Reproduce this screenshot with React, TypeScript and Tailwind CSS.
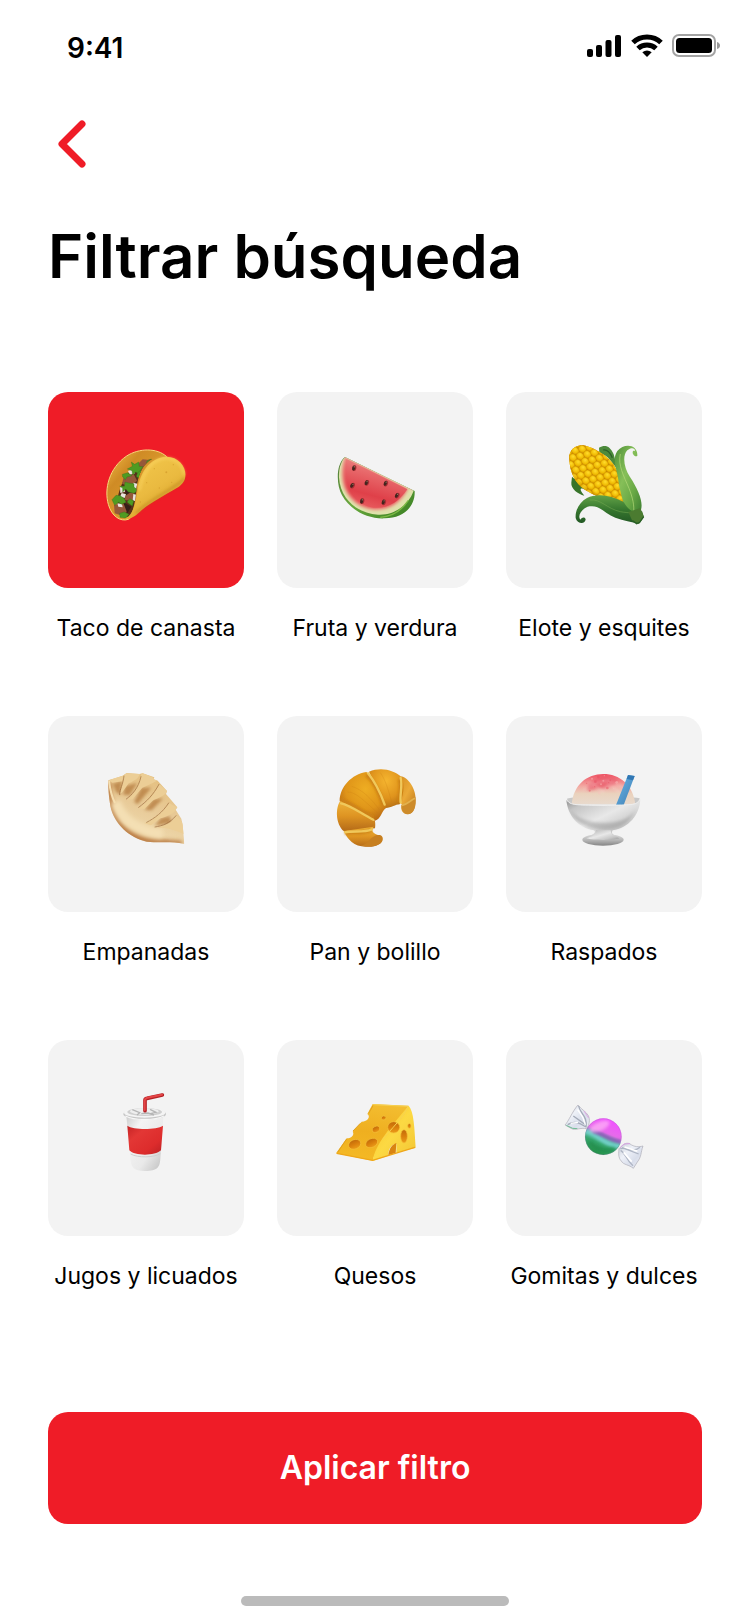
import { useState, type ReactNode } from "react";

type Stop = [number, string];

function Linear({ id, stops, x1 = 0, y1 = 0, x2 = 0, y2 = 1 }: { id: string; stops: Stop[]; x1?: number; y1?: number; x2?: number; y2?: number }) {
  return (
    <linearGradient id={id} x1={x1} y1={y1} x2={x2} y2={y2}>
      {stops.map(([o, c]) => <stop key={o} offset={o} stopColor={c} />)}
    </linearGradient>
  );
}

function Radial({ id, stops, cx = 0.5, cy = 0.5, r = 0.5 }: { id: string; stops: Stop[]; cx?: number; cy?: number; r?: number }) {
  return (
    <radialGradient id={id} cx={cx} cy={cy} r={r}>
      {stops.map(([o, c]) => <stop key={o} offset={o} stopColor={c} />)}
    </radialGradient>
  );
}

function Soft({ id, d }: { id: string; d: number }) {
  return (
    <filter id={id} x="-30%" y="-30%" width="160%" height="160%">
      <feGaussianBlur stdDeviation={d} />
    </filter>
  );
}

function Art({ box, children }: { box: string; children: ReactNode }) {
  return <svg viewBox={box} className="size-[110px]" aria-hidden="true">{children}</svg>;
}

function Taco() {
  return (
    <Art box="3 15 330 330">
      <defs>
        <Linear id="taco-back" x2={1} stops={[[0, "#f4c14a"], [0.3, "#cf8b25"], [1, "#e8ac38"]]} />
        <Linear id="taco-front" x1={0.2} x2={0.8} stops={[[0, "#f3c84c"], [0.5, "#eaba40"], [1, "#d09822"]]} />
        <Soft id="taco-soft" d={5} />
        <clipPath id="taco-clip"><path d="M226 79C168 81 146 116 139 182C136 215 129 247 117 263C76 282 43 216 58 157C72 103 120 57 177 60C199 62 216 69 226 79Z" /></clipPath>
      </defs>
      <path d="M230 80C201 53 147 54 110 78C57 114 42 177 55 223C65 259 91 276 115 268C132 260 144 214 150 170Z" fill="url(#taco-back)" stroke="#f7d779" strokeWidth="3" />
      <g clipPath="url(#taco-clip)">
        <path d="M188 88C158 88 123 113 103 147C82 187 72 235 96 260L133 261L163 115Z" fill="#573019" />
        <path d="M158 88l21 2 -7 25 -29 18 -5 -25zM102 137l29 -5 10 20 -20 18 -25 -9zM110 187l23 3 -6 23 -24 -3zM72 224l28 -5 15 20 -17 19 -24 -8z" fill="#96583a" />
        <path d="M108 168l20 15 -22 14zM99 216l25 14 -12 20z" fill="#351f18" />
        <g fill="#e9e5df"><path d="M114 123l15 -6 6 13 -16 4zM90 172l13 -2 2 15 -14 4zM130 158l12 3 -3 15 -12 -2zM95 189l13 4 -4 11 -14 -4zM130 192l9 2 -2 20 -9 -3zM82 220l14 2 2 10 -13 -2z" /></g>
        <g fill="#4f9b22" stroke="#34701c" strokeWidth="1">
          <path d="M127 109l-3 -13 10 7 12 -7 2 13 11 1 -8 12 1 12 -15 -8 -9 9 -2 -13 -14 -5z" />
          <path d="M97 133l16 -5 13 9 -15 4 -5 8 -8 -8z" />
          <path d="M103 169l2 -13 12 3 15 2 0 10 12 10 -12 9 -17 -4 -8 -9 -9 9 0 -12 -9 -5z" />
          <path d="M66 209l12 -13 13 1 12 9 5 11 -13 6 -9 -6 -12 9z" />
          <path d="M89 250l14 -4 14 7 -10 12 -17 -3z" />
          <path d="M111 216l8 -10 12 7 -4 15 -9 -6z" />
          <path d="M143 128l11 -8 2 14 -8 12 -9 -7zM171 93l13 -6 -8 18 -8 4z" />
        </g>
      </g>
      <path d="M143 179C149 128 179 85 225 80C267 78 290 112 286 140C284 155 275 165 259 175C224 196 177 220 150 245C132 262 117 269 101 268C134 255 137 213 143 179Z" fill="url(#taco-front)" />
      <path d="M148 181C159 129 180 93 220 85C251 80 280 102 282 134" fill="none" stroke="#ffda6a" strokeWidth="5" opacity=".75" filter="url(#taco-soft)" />
      <path d="M283 145C271 168 185 203 138 250" stroke="#a76c10" strokeWidth="6" fill="none" opacity=".5" filter="url(#taco-soft)" />
      <g fill="#c98d20" opacity=".5"><circle cx="193" cy="116" r="2" /><circle cx="229" cy="127" r="3" /><circle cx="170" cy="158" r="2" /><circle cx="208" cy="174" r="2" /><circle cx="250" cy="104" r="2" /><circle cx="151" cy="216" r="2" /><circle cx="245" cy="157" r="2" /></g>
    </Art>
  );
}

function Watermelon() {
  const seeds = [[101, 99, 12], [96, 151, 30], [139, 143, 20], [196, 145, 20], [125, 198, 12], [190, 201, 20], [230, 181, 28]];
  return (
    <Art box="0 0 330 330">
      <defs>
        <Linear id="melon-flesh" x1={0.7} y1={0} x2={0.35} y2={1} stops={[[0, "#ef9a92"], [0.35, "#e8696b"], [0.75, "#df4049"], [1, "#e85b5e"]]} />
        <Linear id="melon-rind" x2={1} stops={[[0, "#527b3a"], [0.5, "#68a83d"], [1, "#367d20"]]} />
        <Soft id="melon-soft" d={4} />
        <clipPath id="melon-clip"><path d="M75 67L278 167C254 204 218 236 172 235C113 232 61 186 60 120C60 97 66 79 75 67Z" /></clipPath>
      </defs>
      <path d="M75 66C49 85 47 146 66 181C90 226 145 253 195 250C250 249 286 216 284 168Z" fill="url(#melon-rind)" />
      <path d="M75 67L281 167C267 207 225 242 174 239C110 235 62 192 57 128C56 101 63 79 75 67Z" fill="#dfe1ab" />
      <g clipPath="url(#melon-clip)"><path d="M77 67L262 162C241 202 205 225 159 222C106 216 68 174 68 119C68 97 72 79 77 67Z" fill="url(#melon-flesh)" stroke="#ef8b82" strokeWidth="5" filter="url(#melon-soft)" /><path d="M79 73L262 163C238 199 205 222 160 218C106 209 70 164 79 73Z" fill="url(#melon-flesh)" /></g>
      <path d="M77 69L276 166" stroke="#efb8a0" strokeWidth="2" />
      <path d="M265 196C241 232 212 245 181 247" stroke="#7eba46" strokeWidth="4" fill="none" />
      {seeds.map(([x, y, a]) => (
        <g key={x + y} transform={`rotate(${a} ${x} ${y})`}><ellipse cx={x + 2} cy={y} rx="6" ry="9" fill="#a72e35" /><ellipse cx={x} cy={y} rx="4.5" ry="7.5" fill="#43251e" /><ellipse cx={x + 1} cy={y - 4} rx="2" ry="2" fill="#99715a" /></g>
      ))}
    </Art>
  );
}

function Corn() {
  const kernels: ReactNode[] = [];
  for (let r = -4; r < 5; r++)
    for (let c = -5; c < 7; c++)
      kernels.push(<ellipse key={`${r}/${c}`} cx={c * 22 + (r % 2 ? 11 : 0)} cy={r * 19} rx="12" ry="11" fill="url(#corn-kernel)" stroke="#c98a00" strokeWidth="1" />);
  return (
    <Art box="-18 15 330 330">
      <defs>
        <Radial id="corn-kernel" cx={0.4} cy={0.35} r={0.7} stops={[[0, "#ffdc2c"], [0.6, "#f1bd05"], [1, "#cf8b00"]]} />
        <Linear id="corn-leaf" x2={1} stops={[[0, "#4d8f38"], [0.4, "#86bf58"], [0.7, "#68a845"], [1, "#3b7c30"]]} />
        <Linear id="corn-lower" stops={[[0, "#63a247"], [0.5, "#37782f"], [1, "#225824"]]} />
        <clipPath id="corn-clip"><path d="M43 90C39 60 63 41 91 47C121 54 169 83 183 116C198 150 211 187 208 216C169 215 116 201 79 171C52 148 45 115 43 90Z" /></clipPath>
      </defs>
      <path d="M51 140C60 150 80 155 94 181C73 169 72 177 88 197C69 192 47 176 49 158Z" fill="#38742a" />
      <path d="M132 53C151 43 165 48 176 73L189 120L166 91C158 80 147 72 133 69Z" fill="#4c8a3b" />
      <path d="M145 60C159 58 167 72 172 83" stroke="#2c602a" strokeWidth="4" fill="none" />
      <g clipPath="url(#corn-clip)"><rect x="30" y="35" width="190" height="190" fill="#c98400" /><g transform="translate(120 127) rotate(47)">{kernels}</g><path d="M44 100C59 155 119 207 205 208L211 232L20 220Z" fill="#a25b00" opacity=".15" /></g>
      <path d="M247 77C249 43 208 37 187 63C169 90 187 119 190 150C193 179 203 205 207 226C222 251 236 258 253 249C270 228 253 183 225 141C207 112 201 78 217 61C229 51 241 54 240 64C235 60 231 65 234 72C238 79 244 81 247 77Z" fill="url(#corn-leaf)" />
      <path d="M196 72C188 105 207 139 222 175C233 203 238 225 236 249" stroke="#b4d978" strokeWidth="3" fill="none" opacity=".7" />
      <path d="M206 216C168 194 123 189 96 204C73 216 60 242 62 264C66 282 91 284 92 268C89 258 78 264 76 269C67 260 78 234 104 229C134 224 150 252 181 263C207 272 229 276 252 280L266 259L261 243C244 253 223 246 206 216Z" fill="url(#corn-lower)" />
      <path d="M104 210C138 206 155 236 196 245C224 250 244 250 258 239" stroke="#77ac54" strokeWidth="3" fill="none" opacity=".5" />
      <path d="M220 246l36 -12 11 27 -15 21 -20 -9z" fill="#4b7b30" />
      <path d="M232 272l13 9 9 -4 12 -17" stroke="#285f25" strokeWidth="4" fill="none" />
    </Art>
  );
}

function Empanada() {
  return (
    <Art box="3 12 330 330">
      <defs>
        <Linear id="emp-base" x1={0.7} x2={0.3} stops={[[0, "#e4bd79"], [0.5, "#e8ca98"], [0.75, "#edd6a8"], [1, "#c18445"]]} />
        <Soft id="emp-soft" d={7} /><Soft id="emp-mid" d={5} /><Soft id="emp-fine" d={2} />
        <clipPath id="emp-clip"><path d="M55 76L98 62L110 54L148 57L158 55L193 67L191 73L203 77L231 108L228 117L262 157L257 164L274 191L278 210L283 267C241 258 210 265 170 260C119 248 72 208 61 153C56 124 54 97 55 76Z" /></clipPath>
      </defs>
      <g clipPath="url(#emp-clip)">
        <rect x="45" y="45" width="245" height="230" fill="url(#emp-base)" />
        <path d="M57 83C53 170 91 247 182 258L276 265" stroke="#b06b31" strokeWidth="12" fill="none" filter="url(#emp-soft)" />
        <path d="M77 141C92 193 147 232 218 237" stroke="#f4dfb4" strokeWidth="30" fill="none" filter="url(#emp-soft)" />
        <g fill="#b07538" opacity=".7" filter="url(#emp-mid)">
          <path d="M68 86L96 77L91 120L78 111Z" /><path d="M105 93L142 84L119 121L99 119Z" /><path d="M154 98L184 98L143 148L132 140Z" /><path d="M190 133L220 130L185 166L164 165Z" /><path d="M213 189L239 184L245 205L194 212Z" />
        </g>
        <g fill="#ecce96" filter="url(#emp-fine)">
          <path d="M55 75L100 61L97 79L67 83Z" /><path d="M102 55L151 55C146 69 137 76 116 85L96 113L90 117C98 91 100 77 102 55Z" /><path d="M155 52L205 75C186 87 170 92 157 98L127 133L112 136C139 110 151 85 155 52Z" /><path d="M207 87L233 109C217 130 198 129 187 138L163 162L146 161C180 135 195 115 207 87Z" /><path d="M238 145L264 158C248 179 229 184 211 190L183 211L163 205C198 192 219 167 238 145Z" /><path d="M259 182L282 207L283 238C244 221 221 216 197 219C230 211 248 201 259 182Z" />
        </g>
        <g fill="none" stroke="#8e592d" strokeWidth="3" strokeLinecap="round" filter="url(#emp-fine)" opacity=".55"><path d="M102 63C99 91 89 100 89 119" /><path d="M153 65C145 101 125 120 109 132" /><path d="M207 88C189 121 169 140 146 157" /><path d="M236 144C218 172 195 189 170 202" /><path d="M258 182C239 205 219 212 195 216" /></g>
        <path d="M57 78C61 108 66 128 75 144" stroke="#f5deb0" strokeWidth="6" fill="none" filter="url(#emp-fine)" />
      </g>
    </Art>
  );
}

function Croissant() {
  return (
    <Art box="0 12 330 330">
      <defs>
        <Radial id="cro-a" cx={0.55} cy={0.35} r={0.7} stops={[[0, "#eead22"], [0.6, "#df9419"], [1, "#b66613"]]} />
        <Radial id="cro-b" cx={0.5} cy={0.3} r={0.75} stops={[[0, "#f5b52f"], [0.6, "#df931c"], [1, "#b16b15"]]} />
        <Linear id="cro-c" stops={[[0, "#eeb33a"], [0.5, "#de9422"], [1, "#b46a18"]]} />
        <Linear id="cro-d" x2={1} stops={[[0, "#d38b20"], [0.5, "#eba936"], [1, "#b66f19"]]} />
        <Soft id="cro-soft" d={3} />
      </defs>
      <path d="M244 64C270 70 292 112 286 143C284 171 272 180 258 177C245 173 241 161 246 150L228 122Z" fill="url(#cro-d)" />
      <path d="M244 150C268 144 275 129 286 126C291 153 281 181 260 177C248 174 243 160 244 150Z" fill="#cd8b2a" />
      <path d="M246 151C265 147 269 137 285 130" stroke="#e2b14e" strokeWidth="5" fill="none" />
      <path d="M147 50C184 34 222 46 244 65C257 94 249 120 239 148C226 148 215 159 197 159Z" fill="url(#cro-b)" />
      <path d="M59 137C60 95 95 58 139 51C173 79 196 132 199 158C183 169 184 192 165 197Z" fill="url(#cro-a)" />
      <path d="M61 137C46 158 46 206 72 229L165 220C167 207 165 202 165 197Z" fill="url(#cro-c)" />
      <path d="M72 228C81 253 103 275 137 275C164 278 190 267 188 252C188 240 171 242 161 233C154 226 157 220 161 215Z" fill="url(#cro-c)" />
      <path d="M121 272C142 270 145 251 170 240C185 238 190 245 187 254C182 273 150 278 121 272Z" fill="#c77f20" />
      <g stroke="#cd8114" strokeWidth="10" fill="none" filter="url(#cro-soft)"><path d="M139 60C165 82 178 115 189 151" /><path d="M63 135C90 140 123 170 161 186" /><path d="M75 234C98 230 130 238 154 225" /><path d="M238 73C246 88 239 117 236 141" /></g>
      <g stroke="#f0c85b" strokeWidth="7" fill="none" strokeLinecap="round"><path d="M144 55C168 84 180 110 194 149" /><path d="M63 145C92 151 121 174 160 194" /><path d="M75 232C102 226 130 234 156 223" /><path d="M242 69C248 91 239 119 242 143" /></g>
      <g stroke="#c57b13" strokeWidth="2" opacity=".35" fill="none"><path d="M82 111C108 109 139 145 174 174M95 94C128 104 154 132 178 164M181 53C196 73 206 109 215 141" /></g>
    </Art>
  );
}

function ShavedIce() {
  const flecks = [[110, 85], [126, 71], [145, 66], [163, 62], [181, 76], [200, 82], [134, 95], [153, 88], [172, 99], [191, 101], [119, 107], [148, 114], [176, 83], [160, 77], [136, 80]];
  return (
    <Art box="-3 12 330 330">
      <defs>
        <Linear id="ice-ball" stops={[[0, "#ee5263"], [0.4, "#f3a7a1"], [0.65, "#ead2bd"], [1, "#e8dacd"]]} />
        <Linear id="ice-bowl" x2={1} stops={[[0, "#8e8e8e"], [0.18, "#c6c6c6"], [0.48, "#e8e8e8"], [0.75, "#c9c9c9"], [1, "#999"]]} />
        <Linear id="ice-spoon" x2={1} stops={[[0, "#2d70aa"], [0.35, "#5aa3d7"], [1, "#407daf"]]} />
        <Linear id="ice-foot" stops={[[0, "#dedede"], [0.55, "#b5b5b5"], [1, "#858585"]]} /><Soft id="ice-soft" d={5} />
      </defs>
      <path d="M51 131C64 125 219 121 269 130L264 148H55Z" fill="#c8c8c8" />
      <path d="M65 148C70 90 110 57 160 57C208 57 249 89 256 148Z" fill="url(#ice-ball)" />
      <path d="M110 105C112 78 160 49 204 78C195 92 174 92 165 103C145 93 130 108 110 105Z" fill="#e7465b" opacity=".6" filter="url(#ice-soft)" />
      <path d="M115 82C143 94 162 65 190 82L226 102M103 103L132 90L158 110L177 87L209 111" stroke="#fff2ef" strokeWidth="4" opacity=".4" fill="none" filter="url(#ice-soft)" />
      {flecks.map(([x, y], i) => <circle key={i} cx={x} cy={y} r={i % 3 + 2} fill={i % 2 ? "#fac1be" : "#e84c5d"} opacity=".45" />)}
      <path d="M234 60L254 63L221 150H198Z" fill="url(#ice-spoon)" /><path d="M234 60L254 63L249 76L230 72Z" fill="#3177b4" />
      <path d="M49 135C60 153 92 150 159 152C229 150 260 153 271 133C269 180 235 220 188 226C183 235 188 241 201 243H118C134 238 138 231 132 226C85 219 53 181 49 135Z" fill="url(#ice-bowl)" />
      <path d="M60 165C90 210 221 224 255 165C235 210 207 223 163 225C104 221 74 198 60 165Z" fill="#777" opacity=".35" filter="url(#ice-soft)" />
      <ellipse cx="159" cy="254" rx="62" ry="18" fill="url(#ice-foot)" /><path d="M109 250C127 242 136 245 138 226H182C183 242 195 242 208 250C189 257 129 256 109 250Z" fill="url(#ice-bowl)" />
      <path d="M53 137C61 153 92 149 159 151C229 149 260 153 267 136" stroke="#eee" strokeWidth="3" fill="none" />
    </Art>
  );
}

function Cup() {
  return (
    <Art box="-12 9 330 330">
      <defs>
        <Linear id="cup-paper" x2={1} stops={[[0, "#cdcdcd"], [0.25, "#f4f4f4"], [0.65, "#e9e9e9"], [1, "#bdbdbd"]]} />
        <Linear id="cup-band" x2={1} stops={[[0, "#c52325"], [0.3, "#e33735"], [0.7, "#dd2c2c"], [1, "#b92023"]]} />
      </defs>
      <path d="M94 108H205L196 236C194 262 188 272 150 273C115 272 110 262 107 242Z" fill="url(#cup-paper)" />
      <path d="M97 137C115 150 184 150 204 137L198 211C178 229 119 228 103 211Z" fill="url(#cup-band)" />
      <path d="M107 222C128 234 177 233 196 221" stroke="#cfcfcf" strokeWidth="3" fill="none" />
      <ellipse cx="149" cy="102" rx="64" ry="17" fill="#c6c6c6" /><ellipse cx="149" cy="98" rx="62" ry="15" fill="#f4f4f4" />
      <ellipse cx="149" cy="96" rx="52" ry="12" fill="#cfcfcf" /><ellipse cx="148" cy="94" rx="43" ry="10" fill="#eee" />
      <path d="M112 89l22 9 -8 7M165 88l18 9 -17 4M139 101l20 -2 18 6" stroke="#b5b5b5" strokeWidth="4" fill="none" />
      <path d="M150 92V61Q150 56 156 55L202 45" stroke="#b32025" strokeWidth="11" fill="none" strokeLinecap="round" />
      <path d="M149 90V61Q150 55 157 53L201 44" stroke="#e54546" strokeWidth="6" fill="none" strokeLinecap="round" />
      <path d="M91 108C118 122 180 122 207 108" stroke="#f7f7f7" strokeWidth="4" fill="none" />
    </Art>
  );
}

function Cheese() {
  const holes = [[89, 178, 19, 14, -22], [140, 174, 19, 13, -25], [153, 133, 12, 9, -24], [176, 99, 7, 6, -10], [206, 127, 18, 17, 0], [237, 154, 10, 20, 0], [253, 123, 5, 7, 0]];
  return (
    <Art box="-15 -6 330 330">
      <defs>
        <Linear id="ch-top" x1={0.6} x2={0.4} stops={[[0, "#f3bd30"], [0.5, "#efaf20"], [1, "#f4b925"]]} />
        <Linear id="ch-side" x2={1} stops={[[0, "#f7c326"], [0.5, "#fcd943"], [1, "#f2c533"]]} />
        <Linear id="ch-hole" stops={[[0, "#c16a0a"], [0.5, "#da7f0c"], [1, "#eb9c19"]]} />
      </defs>
      <path d="M143 57L251 62C238 91 161 163 143 227L33 205L65 160C81 160 89 147 83 140L110 110C128 110 138 95 127 87Z" fill="url(#ch-top)" />
      <path d="M251 62C267 81 268 126 272 188L214 203V176C197 178 190 193 190 212L143 228C151 177 194 129 251 62Z" fill="url(#ch-side)" />
      <path d="M214 174C201 179 192 190 190 211L212 204Z" fill="#d98411" />
      {holes.map(([x, y, rx, ry, a]) => <g key={x} transform={`rotate(${a} ${x} ${y})`}><ellipse cx={x} cy={y} rx={rx} ry={ry} fill="url(#ch-hole)" stroke="#f4c039" strokeWidth="2" /></g>)}
      <path d="M144 59L249 64C238 94 198 133 172 164" stroke="#f7d252" strokeWidth="3" fill="none" /><path d="M35 205L143 226L270 187" stroke="#efa619" strokeWidth="4" fill="none" />
      <path d="M144 62L131 85M106 115L84 138M65 162L38 202" stroke="#e0a01f" strokeWidth="3" />
    </Art>
  );
}

function Candy() {
  return (
    <Art box="-3 -6 330 330">
      <defs>
        <Linear id="ca-ball" x1={0.68} y1={0.05} x2={0.32} y2={0.95} stops={[[0, "#f151ff"], [0.38, "#e66ce9"], [0.48, "#8f86bf"], [0.57, "#53b99e"], [0.7, "#35a66c"], [1, "#25934a"]]} />
        <Linear id="ca-wrap" x2={1} stops={[[0, "#c6cbd4"], [0.35, "#eef1f8"], [0.65, "#d9deeb"], [1, "#f0f0f6"]]} />
        <Soft id="ca-soft" d={5} /><Soft id="ca-fold" d={2} /><clipPath id="ca-clip"><circle cx="160" cy="155" r="54" /></clipPath>
      </defs>
      <path d="M84 60C93 73 108 79 115 92C121 103 118 122 109 131C92 127 75 137 65 131L45 120C56 109 67 79 84 60Z" fill="url(#ca-wrap)" stroke="#aaa9b3" strokeWidth="2" />
      <g filter="url(#ca-fold)"><path d="M86 63C89 85 114 94 108 127M53 119C75 105 91 116 108 126M70 93L105 118" stroke="#a4abb9" strokeWidth="4" fill="none" />
        <path d="M83 74L98 96L106 119M62 115L84 112" stroke="#fff" strokeWidth="4" fill="none" /></g>
      <path d="M49 121L68 130L82 131" stroke="#70bd94" strokeWidth="3" fill="none" /><path d="M102 78L116 99" stroke="#dda9e5" strokeWidth="3" />
      <path d="M207 191C216 182 226 171 239 176C253 187 267 186 279 183C272 202 275 215 262 231L250 250C238 239 220 240 214 228C204 219 206 202 207 191Z" fill="url(#ca-wrap)" stroke="#aaaab5" strokeWidth="2" />
      <g filter="url(#ca-fold)"><path d="M211 191C231 186 249 205 270 187M212 196C229 207 226 222 249 242M216 188L266 207" stroke="#aeb5c4" strokeWidth="4" fill="none" /><path d="M224 186L262 199M221 202L245 230" stroke="#fff" strokeWidth="5" fill="none" /></g>
      <path d="M211 188L222 177L240 176" stroke="#d9a1e5" strokeWidth="3" fill="none" />
      <circle cx="160" cy="155" r="55" fill="url(#ca-ball)" />
      <g clipPath="url(#ca-clip)"><path d="M103 137C136 142 167 184 213 185" stroke="#72d2ca" strokeWidth="13" fill="none" filter="url(#ca-soft)" /><path d="M129 139C166 148 181 170 213 169" stroke="#8756b3" strokeWidth="9" fill="none" filter="url(#ca-soft)" /><ellipse cx="149" cy="124" rx="32" ry="13" transform="rotate(-24 149 124)" fill="#ffb5f7" opacity=".7" filter="url(#ca-soft)" /><path d="M119 170C135 191 169 204 195 190" stroke="#157b3c" strokeWidth="12" fill="none" opacity=".4" filter="url(#ca-soft)" /></g>
      <circle cx="160" cy="155" r="54" fill="none" stroke="#8a6fae" strokeWidth="2" opacity=".35" />
    </Art>
  );
}

const categories = [
  { name: "Taco de canasta", art: <Taco /> },
  { name: "Fruta y verdura", art: <Watermelon /> },
  { name: "Elote y esquites", art: <Corn /> },
  { name: "Empanadas", art: <Empanada /> },
  { name: "Pan y bolillo", art: <Croissant /> },
  { name: "Raspados", art: <ShavedIce /> },
  { name: "Jugos y licuados", art: <Cup /> },
  { name: "Quesos", art: <Cheese /> },
  { name: "Gomitas y dulces", art: <Candy /> },
];

function StatusBar() {
  return (
    <header className="flex h-24 items-center justify-between pr-[30px] pl-[67px]">
      <span className="text-[28px] leading-8 font-semibold">9:41</span>
      <svg width="134" height="28" viewBox="0 0 134 28" aria-hidden="true">
        <rect x="1" y="15" width="6" height="8" rx="2" /><rect x="10" y="11" width="6" height="12" rx="2" /><rect x="19.5" y="6" width="6" height="17" rx="2" /><rect x="29" y="1" width="6" height="22" rx="2" />
        <g fill="none" stroke="#000" strokeWidth="5"><path d="M47 8.500C54.500 1 67.500 1 75 8.500" /><path d="M52 14.500C57 9.800 65 9.800 70 14.500" /></g>
        <path d="M56.300 18.300Q61 14.800 65.700 18.300L61 23Z" />
        <rect x="87" y="1" width="42" height="21" rx="6" fill="none" stroke="#000" strokeWidth="2" opacity=".36" /><rect x="90" y="4" width="36" height="15" rx="3.500" /><path d="M131 8Q134 9 134 11.500T131 15Z" opacity=".4" />
      </svg>
    </header>
  );
}

export default function App() {
  const [selected, setSelected] = useState("Taco de canasta");
  return (
    <div className="flex min-h-screen flex-col bg-white font-['Inter',sans-serif] text-black">
      <StatusBar />
      <main className="flex flex-col px-12">
        <button type="button" aria-label="Volver" className="mt-5 flex h-14 w-12 items-center justify-center">
          <svg width="30" height="50" viewBox="0 0 30 50" fill="none" stroke="#ef1c27" strokeWidth="7" strokeLinecap="round" strokeLinejoin="round" aria-hidden="true"><path d="M25 5L5 25L25 45" /></svg>
        </button>
        <h1 className="mt-12 text-[60px] leading-[72px] font-semibold">Filtrar búsqueda</h1>
        <div className="mt-[100px] grid grid-cols-3 gap-x-[33px] gap-y-[72px]">
          {categories.map(({ name, art }) => (
            <button key={name} type="button" aria-pressed={selected === name} onClick={() => setSelected(name)} className="flex flex-col items-center gap-6">
              <span className={`flex aspect-square w-full items-center justify-center rounded-[20px] ${selected === name ? "bg-[#ef1c27]" : "bg-[#f3f3f3]"}`}>{art}</span>
              <span className="text-[23px] leading-8 whitespace-nowrap">{name}</span>
            </button>
          ))}
        </div>
        <button type="button" className="mt-[120px] h-28 rounded-[20px] bg-[#ef1c27] text-[32px] leading-10 font-semibold text-white">Aplicar filtro</button>
      </main>
      <div className="mx-auto mt-[72px] mb-[18px] h-2.5 w-[268px] rounded-full bg-[#bbb]" />
    </div>
  );
}
